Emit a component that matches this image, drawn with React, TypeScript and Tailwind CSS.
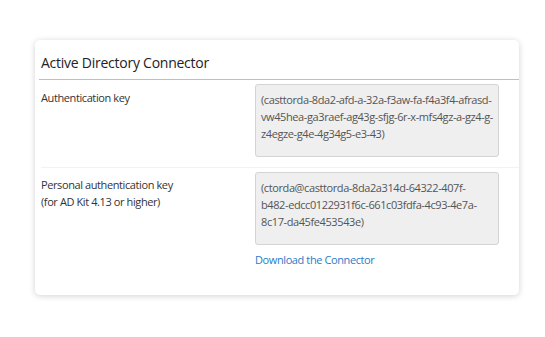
import React from 'react';

const rows = [
  {
    label: ['Authentication key'],
    lines: [
      '(casttorda-8da2-afd-a-32a-f3aw-fa-f4a3f4-afrasd-',
      'vw45hea-ga3raef-ag43g-sfjg-6r-x-mfs4gz-a-gz4-g-',
      'z4egze-g4e-4g34g5-e3-43)',
    ],
  },
  {
    label: ['Personal authentication key', '(for AD Kit 4.13 or higher)'],
    lines: [
      '(ctorda@casttorda-8da2a314d-64322-407f-',
      'b482-edcc0122931f6c-661c03fdfa-4c93-4e7a-',
      '8c17-da45fe453543e)',
    ],
  },
];

const KeyBox: React.FC<{ lines: string[] }> = ({ lines }) => (
  <div className="w-[244px] h-[73px] rounded-[3px] border border-[#d4d4d4] bg-[#efefef] px-[5px] pt-[6px] text-[#555] leading-[17px]">
    {lines.map((l) => (
      <div key={l} className="whitespace-nowrap">
        {l}
      </div>
    ))}
  </div>
);

export default function App() {
  return (
    <div className="w-[545px] h-[337px] bg-white pt-[40px] pl-[35px] font-['Open_Sans',sans-serif] text-[11px] tracking-[-0.4px]">
      <div className="w-[484px] h-[255px] rounded-[5px] bg-white shadow-[0_1px_6px_rgba(0,0,0,0.18)]">
        <div className="h-[39px] pl-[6px] pt-[13px] text-[14px] tracking-[-0.25px] leading-[20px] text-[#222]">
          Active Directory Connector
        </div>
        <div className="ml-[4px] border-t border-[#bfbfbf]" />

        {/* authentication key */}
        <div className="ml-[6px] flex pt-[4px] pb-[10px]">
          <div className="w-[214px] pt-[5px] leading-[17px] text-[#333]">
            {rows[0].label[0]}
          </div>
          <KeyBox lines={rows[0].lines} />
        </div>
        <div className="ml-[6px] border-t border-[#f2f2f2]" />

        {/* personal key */}
        <div className="ml-[6px] flex pt-[4px]">
          <div className="w-[214px] pt-[4px] leading-[17px] text-[#333]">
            {rows[1].label.map((l) => (
              <div key={l}>{l}</div>
            ))}
          </div>
          <div>
            <KeyBox lines={rows[1].lines} />
            <a href="#" className="mt-[6px] block leading-[17px] text-[#2c7bc7]">
              Download the Connector
            </a>
          </div>
        </div>
      </div>
    </div>
  );
}
